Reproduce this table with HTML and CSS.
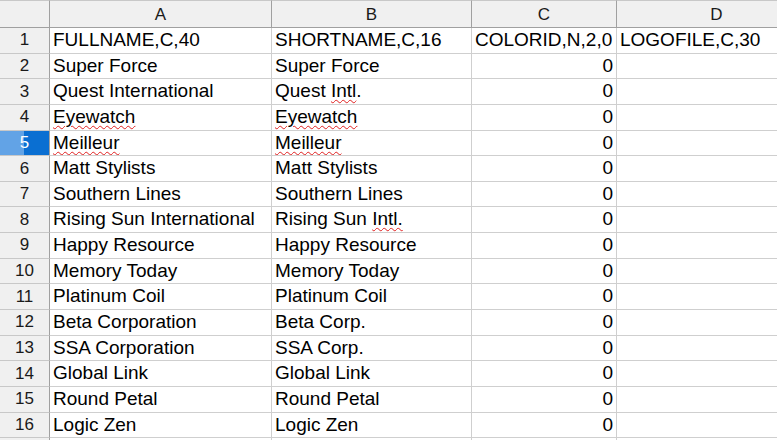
FILE: index.html
```html
<!DOCTYPE html>
<html>
<head>
<meta charset="utf-8">
<link rel="stylesheet" href="styles.css">
</head>
<body>
<div class="sheet">
  <div class="corner"></div>
  <div class="colhead">A</div>
  <div class="colhead">B</div>
  <div class="colhead">C</div>
  <div class="colhead">D</div>

  <div class="rowhead">1</div><div class="cell">FULLNAME,C,40</div><div class="cell">SHORTNAME,C,16</div><div class="cell">COLORID,N,2,0</div><div class="cell">LOGOFILE,C,30</div>
  <div class="rowhead">2</div><div class="cell">Super Force</div><div class="cell">Super Force</div><div class="cell num">0</div><div class="cell"></div>
  <div class="rowhead">3</div><div class="cell">Quest International</div><div class="cell">Quest <span class="sp">Intl</span>.</div><div class="cell num">0</div><div class="cell"></div>
  <div class="rowhead">4</div><div class="cell"><span class="sp">Eyewatch</span></div><div class="cell"><span class="sp">Eyewatch</span></div><div class="cell num">0</div><div class="cell"></div>
  <div class="rowhead sel">5</div><div class="cell"><span class="sp">Meilleur</span></div><div class="cell"><span class="sp">Meilleur</span></div><div class="cell num">0</div><div class="cell"></div>
  <div class="rowhead">6</div><div class="cell">Matt Stylists</div><div class="cell">Matt Stylists</div><div class="cell num">0</div><div class="cell"></div>
  <div class="rowhead">7</div><div class="cell">Southern Lines</div><div class="cell">Southern Lines</div><div class="cell num">0</div><div class="cell"></div>
  <div class="rowhead">8</div><div class="cell">Rising Sun International</div><div class="cell">Rising Sun <span class="sp">Intl.</span></div><div class="cell num">0</div><div class="cell"></div>
  <div class="rowhead">9</div><div class="cell">Happy Resource</div><div class="cell">Happy Resource</div><div class="cell num">0</div><div class="cell"></div>
  <div class="rowhead">10</div><div class="cell">Memory Today</div><div class="cell">Memory Today</div><div class="cell num">0</div><div class="cell"></div>
  <div class="rowhead">11</div><div class="cell">Platinum Coil</div><div class="cell">Platinum Coil</div><div class="cell num">0</div><div class="cell"></div>
  <div class="rowhead">12</div><div class="cell">Beta Corporation</div><div class="cell">Beta Corp.</div><div class="cell num">0</div><div class="cell"></div>
  <div class="rowhead">13</div><div class="cell">SSA Corporation</div><div class="cell">SSA Corp.</div><div class="cell num">0</div><div class="cell"></div>
  <div class="rowhead">14</div><div class="cell">Global Link</div><div class="cell">Global Link</div><div class="cell num">0</div><div class="cell"></div>
  <div class="rowhead">15</div><div class="cell">Round Petal</div><div class="cell">Round Petal</div><div class="cell num">0</div><div class="cell"></div>
  <div class="rowhead">16</div><div class="cell">Logic Zen</div><div class="cell">Logic Zen</div><div class="cell num">0</div><div class="cell"></div>
  <div class="rowhead"></div><div class="cell"></div><div class="cell"></div><div class="cell"></div><div class="cell"></div>
</div>
</body>
</html>
```
FILE: styles.css
```css
html, body {
  margin: 0;
  padding: 0;
  background: #ffffff;
  overflow: hidden;
}
body {
  width: 777px;
  height: 440px;
  font-family: "Liberation Sans", Arial, sans-serif;
}
.sheet {
  display: grid;
  grid-template-columns: 50px 222px 200px 145px 200px;
  grid-template-rows: 28px;
  grid-auto-rows: 25.65px;
  width: 817px;
}
.corner, .colhead, .rowhead {
  background: #f0f0f0;
  color: #1a1a1a;
  box-sizing: border-box;
  display: flex;
  align-items: center;
  justify-content: center;
}
.corner {
  border-top: 1px solid #c8c8c8;
  border-right: 1px solid #a0a0a0;
  border-bottom: 1px solid #a0a0a0;
}
.colhead {
  font-size: 17px;
  border-top: 1px solid #c8c8c8;
  border-right: 1px solid #a0a0a0;
  border-bottom: 1px solid #a0a0a0;
  padding-top: 1px;
}
.rowhead {
  font-size: 17px;
  border-right: 1px solid #a0a0a0;
  border-bottom: 1px solid #c8c8c8;
}
.rowhead.sel {
  background: linear-gradient(to right, #62a3e6 0, #62a3e6 24px, #0a6fd2 24px);
  color: #ffffff;
}
.cell {
  font-size: 19px;
  line-height: 24px;
  color: #000000;
  box-sizing: border-box;
  border-right: 1px solid #cfcfcf;
  border-bottom: 1px solid #cfcfcf;
  padding: 0 3px;
  white-space: nowrap;
  overflow: hidden;
}
.cell.num {
  text-align: right;
}
.sp {
  text-decoration: underline wavy #e02020;
  text-decoration-thickness: 1px;
  text-underline-offset: 2px;
}
```
